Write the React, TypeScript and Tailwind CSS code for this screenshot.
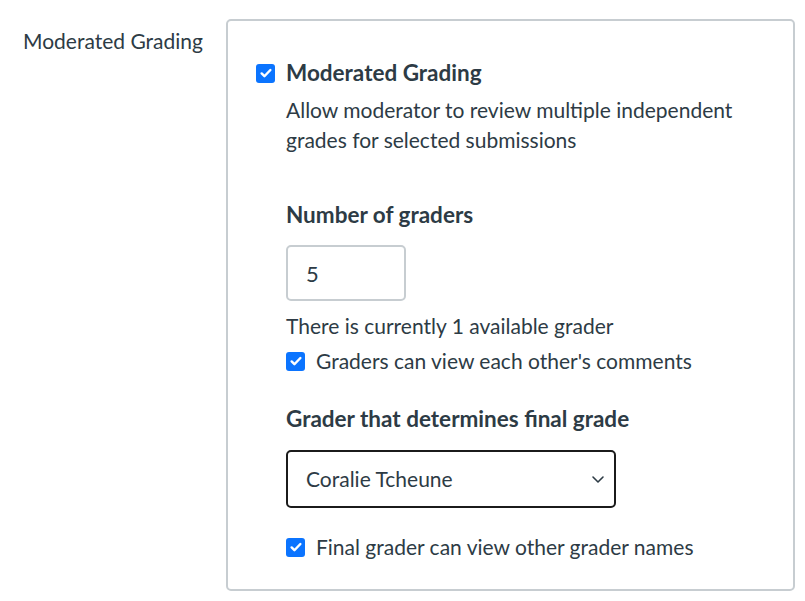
import React from "react";

function Check({ className = "" }: { className?: string }) {
  return (
    <span className={`flex h-[19px] w-[19px] shrink-0 items-center justify-center rounded-[3px] bg-[#0b74ff] ${className}`}>
      <svg width="14" height="14" viewBox="0 0 16 16" fill="none">
        <path d="M3 8.5l3.2 3.2L13 4.6" stroke="white" strokeWidth="2.8" strokeLinecap="round" strokeLinejoin="round" />
      </svg>
    </span>
  );
}

export default function App() {
  return (
    <div className="flex h-[601px] w-[805px] bg-white text-[#2d3b45]" style={{ fontFamily: "Lato, 'Open Sans', sans-serif" }}>
      <div className="w-[226px] shrink-0 pl-[23px] pt-[28px] text-[21px] leading-[26px]">Moderated Grading</div>
      <div className="mt-[19px] h-[572px] w-[569px] rounded-[5px] border-2 border-[#c7cdd1] pl-[28px] pt-[38px]">
        <div className="flex items-center gap-[11px]">
          <Check />
          <span className="text-[22.5px] font-bold leading-[28px]">Moderated Grading</span>
        </div>
        <div className="ml-[30px]">
          <p className="mt-[8px] text-[21px] leading-[30px]">
            Allow moderator to review multiple independent
            <br />
            grades for selected submissions
          </p>
          <div className="mt-[46px] text-[22.5px] font-bold leading-[28px]">Number of graders</div>
          <div className="mt-[16px] flex h-[56px] w-[120px] items-center rounded-[5px] border-2 border-[#c7cdd1] pl-[18px] text-[22px]">5</div>
          <div className="mt-[11px] text-[21px] leading-[28px]">There is currently 1 available grader</div>
          <div className="mt-[7px] flex items-center gap-[11px] text-[21px] leading-[28px]">
            <Check />
            <span>Graders can view each other's comments</span>
          </div>
          <div className="mt-[30px] text-[22.5px] font-bold leading-[28px]">Grader that determines final grade</div>
          <div className="mt-[17px] flex h-[58px] w-[330px] items-center justify-between rounded-[5px] border-2 border-[#1b1b1b] pl-[18px] pr-[9px] text-[21px]">
            <span>Coralie Tcheune</span>
            <svg width="14" height="14" viewBox="0 0 14 14" fill="none">
              <path d="M2 5l5 5 5-5" stroke="#2d3b45" strokeWidth="1.6" strokeLinecap="round" strokeLinejoin="round" />
            </svg>
          </div>
          <div className="mt-[25px] flex items-center gap-[11px] text-[21px] leading-[28px]">
            <Check />
            <span>Final grader can view other grader names</span>
          </div>
        </div>
      </div>
    </div>
  );
}
